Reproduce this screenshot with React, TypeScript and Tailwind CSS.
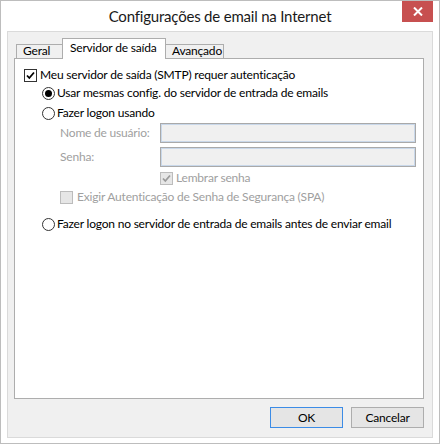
import { ReactNode } from "react";

function CheckBox({ checked, disabled }: { checked?: boolean; disabled?: boolean }) {
  return (
    <span
      className={`w-[13px] h-[13px] shrink-0 border flex items-center justify-center ${
        disabled ? "border-[#bcbcbc] bg-[#e6e6e6]" : "border-[#333333] bg-white"
      }`}
    >
      {checked && (
        <svg width="11" height="11" viewBox="0 0 11 11">
          <path
            d="M2 5.5 L4.3 8 L9 2.5"
            fill="none"
            stroke={disabled ? "#9a9a9a" : "#000"}
            strokeWidth="1.8"
          />
        </svg>
      )}
    </span>
  );
}

function Radio({ checked }: { checked?: boolean }) {
  return (
    <span className="w-[13px] h-[13px] shrink-0 rounded-full border border-[#333333] bg-white flex items-center justify-center">
      {checked && <span className="w-[7px] h-[7px] rounded-full bg-black" />}
    </span>
  );
}

function Field({ label }: { label: string }) {
  return (
    <div className="flex items-center h-[20px] pl-[45px]">
      <span className="w-[100px] text-[#a0a0a0]">{label}</span>
      <div className="w-[256px] h-[20px] border border-[#a9a9a9] bg-[#f0f0f0] shadow-[inset_0_0_0_1px_#c9d8ea]" />
    </div>
  );
}

function Tab({ children, active, w }: { children: ReactNode; active?: boolean; w: string }) {
  if (active) {
    return (
      <div className={`${w} h-[21px] -mb-px pl-[7px] pt-[3px] border border-b-0 border-[#adadad] bg-white relative z-10`}>
        {children}
      </div>
    );
  }
  return (
    <div className={`${w} h-[14px] mt-[6px] pl-[6px] pt-0 border border-b-0 border-[#adadad] bg-[#f0f0f0] overflow-hidden`}>
      {children}
    </div>
  );
}

export default function App() {
  return (
    <div
      className="w-[440px] h-[444px] bg-white border border-[#bdbdbd] flex flex-col relative text-[12px] tracking-[-0.2px] text-black leading-none whitespace-nowrap"
      style={{ fontFamily: 'Lato, "Noto Sans", sans-serif' }}
    >
      <div className="h-[30px] flex items-center justify-center text-[15px] text-[#1a1a1a]">
        Configurações de email na Internet
      </div>
      <button className="absolute top-0 right-[6px] w-[31px] h-[21px] bg-[#c75050] flex items-center justify-center">
        <svg width="10" height="9" viewBox="0 0 10 9">
          <path d="M1 0.5 L9 8.5 M9 0.5 L1 8.5" stroke="#fff" strokeWidth="2" />
        </svg>
      </button>

      <div className="mx-[6px] h-[407px] border border-[#dadada] bg-[#f0f0f0] flex flex-col pt-[6px] px-[6px]">
        <div className="flex items-start h-[20px] pl-[2px]">
          <Tab w="w-[47px]">Geral</Tab>
          <Tab active w="w-[104px] -ml-px">Servidor de saída</Tab>
          <Tab w="w-[59px] -ml-px">Avançado</Tab>
        </div>

        <div className="w-[410px] h-[341px] border border-[#adadad] bg-white flex flex-col">
          <div className="mt-[7px] h-[18px] flex items-center gap-[3px] pl-[9px]">
            <CheckBox checked />
            <span>Meu servidor de saída (SMTP) requer autenticação</span>
          </div>
          <div className="h-[18px] flex items-center gap-[2px] pl-[27px]">
            <Radio checked />
            <span>Usar mesmas config. do servidor de entrada de emails</span>
          </div>
          <div className="mt-[2px] h-[18px] flex items-center gap-[2px] pl-[27px]">
            <Radio />
            <span>Fazer logon usando</span>
          </div>
          <div className="mt-[1px]">
            <Field label="Nome de usuário:" />
          </div>
          <div className="mt-[4px]">
            <Field label="Senha:" />
          </div>
          <div className="mt-[2px] h-[18px] flex items-center gap-[3px] pl-[145px] text-[#a0a0a0]">
            <CheckBox checked disabled />
            <span>Lembrar senha</span>
          </div>
          <div className="mt-[1px] h-[18px] flex items-center gap-[4px] pl-[45px] text-[#a0a0a0]">
            <CheckBox disabled />
            <span>Exigir Autenticação de Senha de Segurança (SPA)</span>
          </div>
          <div className="mt-[9px] h-[18px] flex items-center gap-[2px] pl-[27px]">
            <Radio />
            <span>Fazer logon no servidor de entrada de emails antes de enviar email</span>
          </div>
        </div>

        <div className="flex justify-end gap-[8px] mt-[8px] pr-[2px]">
          <button className="w-[73px] h-[21px] border border-[#3c8ce6] bg-[#e5e5e5] flex items-center justify-center">
            OK
          </button>
          <button className="w-[73px] h-[21px] border border-[#adadad] bg-[#e5e5e5] flex items-center justify-center">
            Cancelar
          </button>
        </div>
      </div>
    </div>
  );
}
